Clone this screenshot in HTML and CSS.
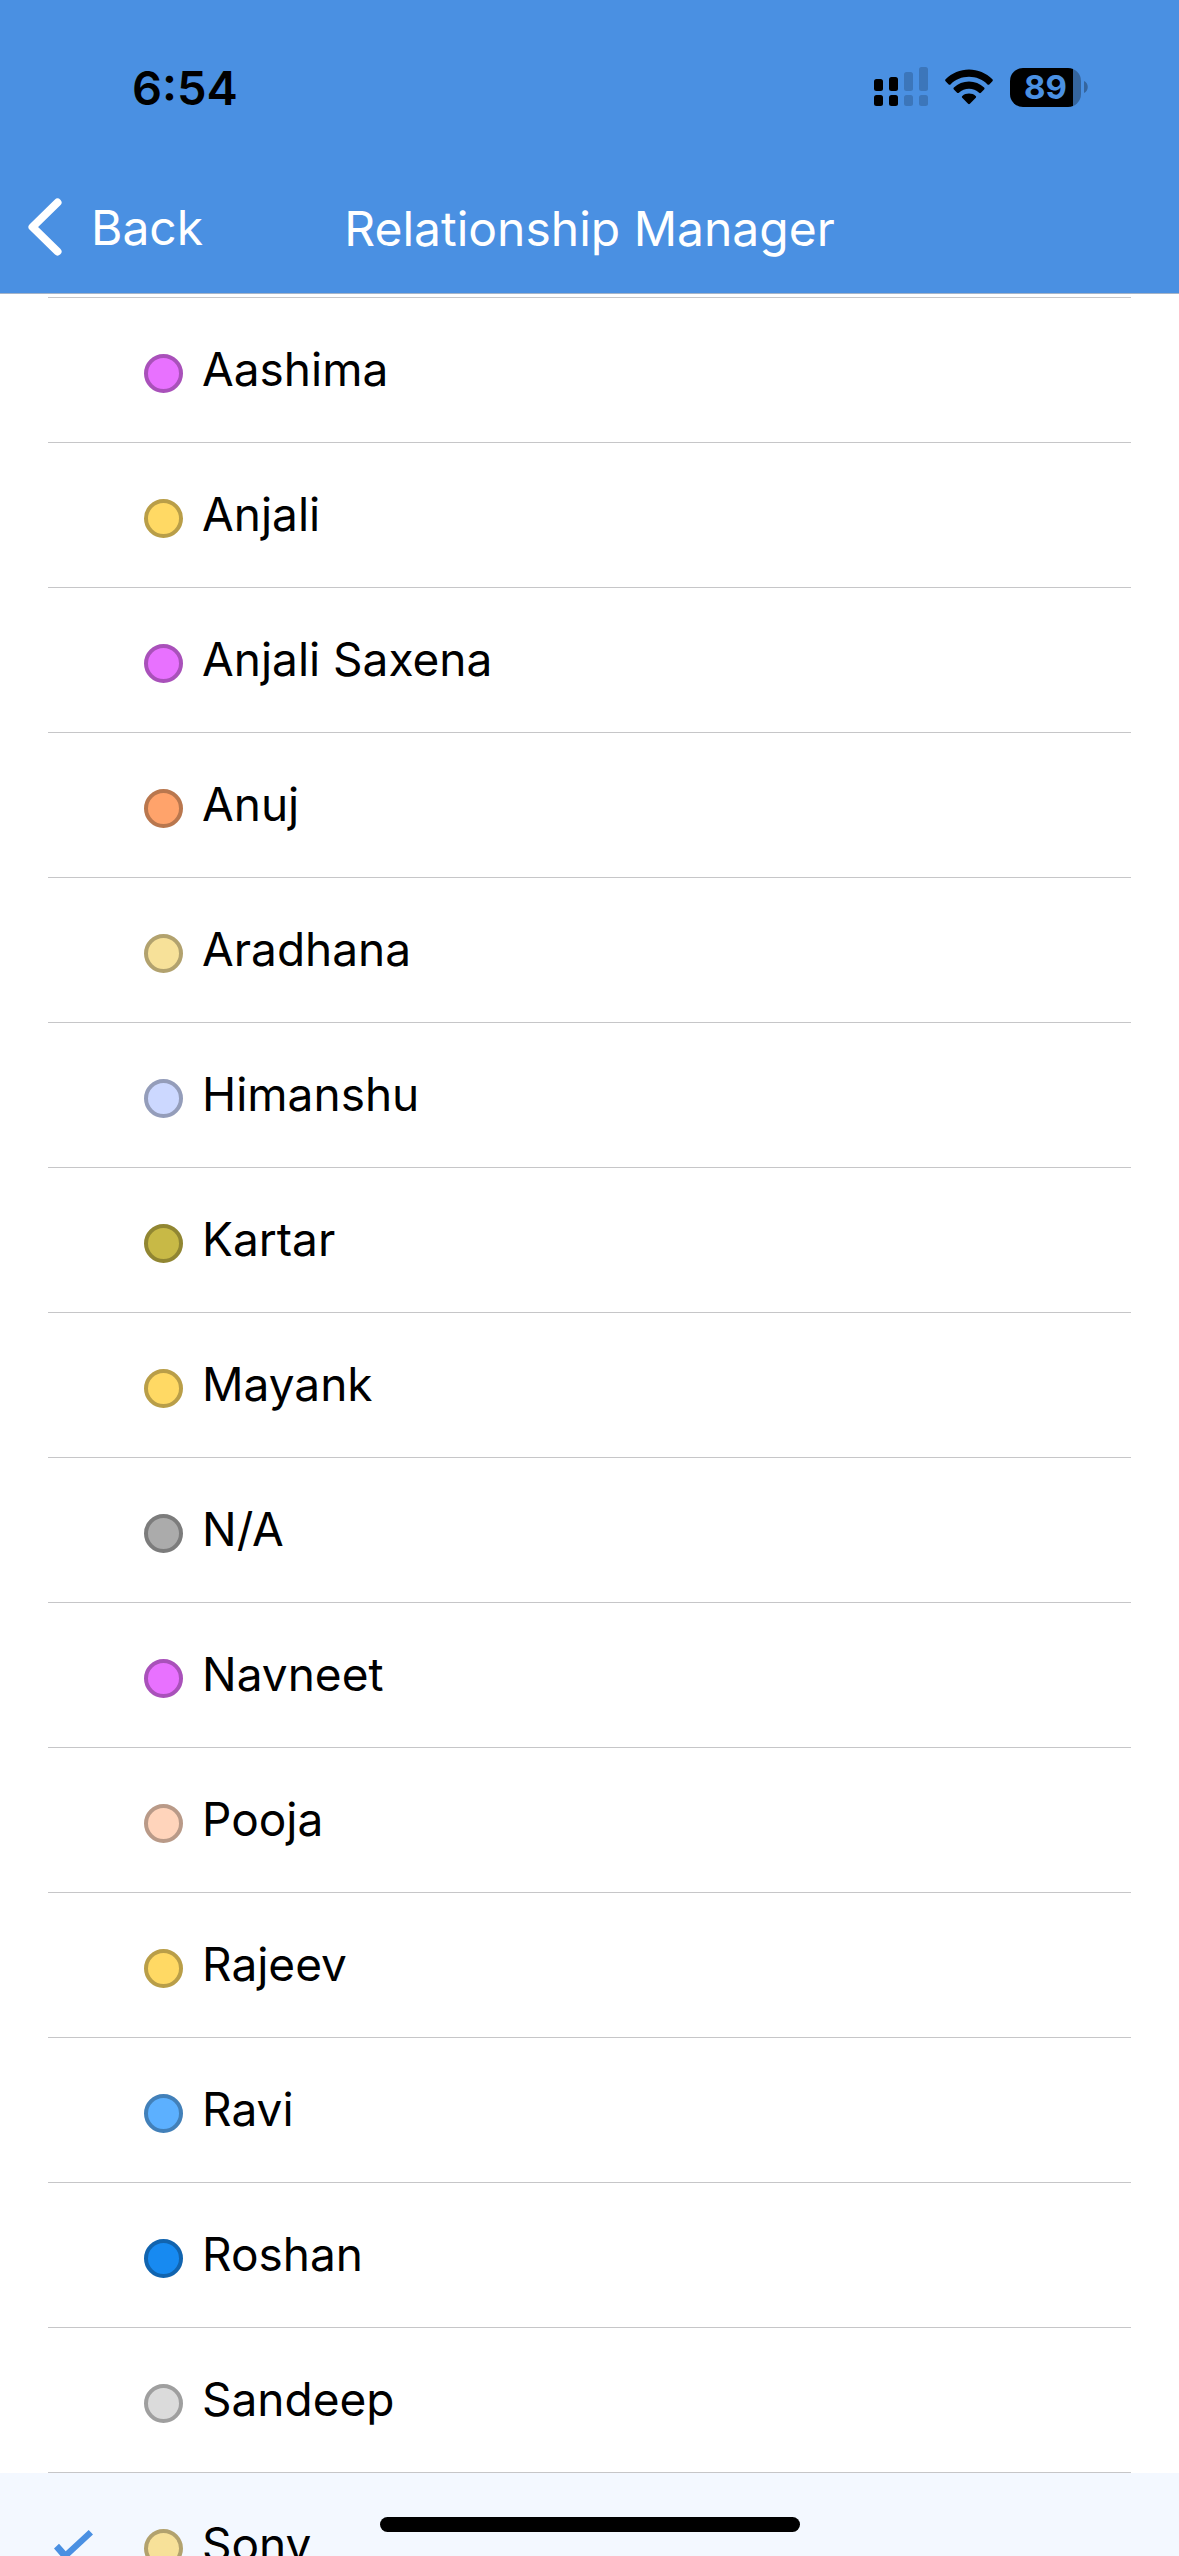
FILE: index.html
```html
<!DOCTYPE html>
<html lang="en">
<head>
    <meta charset="UTF-8">
    <meta name="viewport" content="width=device-width, initial-scale=1.0">
    <title>Relationship Manager</title>
    <link rel="stylesheet" href="styles.css">
</head>
<body>
    <header class="header">
        <div class="status-bar">
            <span class="time">6:54</span>
            <div class="status-icons">
                <svg class="signal" viewBox="0 0 54 40" aria-hidden="true">
                    <rect x="0" y="12" width="9" height="12" rx="2.5"/>
                    <rect x="15" y="10" width="9" height="14" rx="2.5"/>
                    <rect class="dim" x="30" y="5" width="9" height="19" rx="2.5"/>
                    <rect class="dim" x="45" y="0" width="9" height="24" rx="2.5"/>
                    <rect x="0" y="28" width="9" height="11" rx="2.5"/>
                    <rect x="15" y="28" width="9" height="11" rx="2.5"/>
                    <rect class="dim" x="30" y="28" width="9" height="11" rx="2.5"/>
                    <rect class="dim" x="45" y="28" width="9" height="11" rx="2.5"/>
                </svg>
                <svg class="wifi" viewBox="0 0 48 36" aria-hidden="true">
                    <path d="M.6 10.3C7 4 15.200 .5 24 .5s17 3.500 23.400 9.800c.6.600.6 1.300 0 1.900l-3.100 3.200c-.6.600-1.200.6-1.800 0C37.500 10.500 31 7.800 24 7.800S10.500 10.500 5.500 15.400c-.6.600-1.200.6-1.800 0L.6 12.200c-.6-.6-.6-1.300 0-1.900z"/>
                    <path d="M8.900 18.600C13 14.700 18.300 12.500 24 12.500s11 2.200 15.100 6.100c.6.600.6 1.300 0 1.900l-3.200 3.200c-.6.600-1.200.6-1.800 0C31.300 21.200 27.800 19.800 24 19.800s-7.300 1.400-10.100 3.900c-.6.500-1.200.5-1.800 0l-3.200-3.200c-.6-.6-.6-1.300 0-1.900z"/>
                    <path d="M17.300 26.900C19.200 25.300 21.500 24.500 24 24.500s4.800.8 6.700 2.400c.6.500.6 1.200.1 1.800l-5.900 6c-.6.600-1.200.6-1.800 0l-5.900-6c-.5-.6-.5-1.300.1-1.800z"/>
                </svg>
                <div class="battery">
                    <div class="battery-level">89</div>
                    <svg class="battery-cap" viewBox="0 0 4 12" aria-hidden="true"><path d="M0 0c5 2 5 10 0 12z"/></svg>
                </div>
            </div>
        </div>
        <nav class="nav-bar">
            <button class="back-btn" type="button">
                <svg viewBox="0 0 34 58" aria-hidden="true"><path d="M29.500 4.500L4.500 29l25 24.500"/></svg>
                Back
            </button>
            <h1 class="title">Relationship Manager</h1>
        </nav>
    </header>

    <ul class="list">
        <li><button class="row" type="button"><span class="row-content"><span class="check"></span><span class="dot violet"></span>Aashima</span></button></li>
        <li><button class="row" type="button"><span class="row-content"><span class="check"></span><span class="dot yellow"></span>Anjali</span></button></li>
        <li><button class="row" type="button"><span class="row-content"><span class="check"></span><span class="dot violet"></span>Anjali Saxena</span></button></li>
        <li><button class="row" type="button"><span class="row-content"><span class="check"></span><span class="dot orange"></span>Anuj</span></button></li>
        <li><button class="row" type="button"><span class="row-content"><span class="check"></span><span class="dot cream"></span>Aradhana</span></button></li>
        <li><button class="row" type="button"><span class="row-content"><span class="check"></span><span class="dot lavender"></span>Himanshu</span></button></li>
        <li><button class="row" type="button"><span class="row-content"><span class="check"></span><span class="dot olive"></span>Kartar</span></button></li>
        <li><button class="row" type="button"><span class="row-content"><span class="check"></span><span class="dot yellow"></span>Mayank</span></button></li>
        <li><button class="row" type="button"><span class="row-content"><span class="check"></span><span class="dot gray"></span>N/A</span></button></li>
        <li><button class="row" type="button"><span class="row-content"><span class="check"></span><span class="dot violet"></span>Navneet</span></button></li>
        <li><button class="row" type="button"><span class="row-content"><span class="check"></span><span class="dot peach"></span>Pooja</span></button></li>
        <li><button class="row" type="button"><span class="row-content"><span class="check"></span><span class="dot yellow"></span>Rajeev</span></button></li>
        <li><button class="row" type="button"><span class="row-content"><span class="check"></span><span class="dot sky"></span>Ravi</span></button></li>
        <li><button class="row" type="button"><span class="row-content"><span class="check"></span><span class="dot blue"></span>Roshan</span></button></li>
        <li><button class="row" type="button"><span class="row-content"><span class="check"></span><span class="dot silver"></span>Sandeep</span></button></li>
        <li>
            <button class="row selected" type="button" aria-pressed="true">
                <span class="row-content"><span class="check"><svg viewBox="0 0 39 31" aria-hidden="true"><path d="M0 18.500l5-4.800 6.700 7.600L34.700 0 39 4.500 10.700 30.700z"/></svg></span><span class="dot cream"></span>Sony</span>
            </button>
        </li>
    </ul>

    <div class="home-indicator"></div>
</body>
</html>
```
FILE: styles.css
```css
* {
    box-sizing: border-box;
}

body {
    font-family: Inter, 'Liberation Sans', sans-serif;
    margin: 0;
    height: 100vh;
    display: flex;
    flex-direction: column;
    overflow: hidden;
    background-color: #fff;
    color: #000;
}

button {
    border: none;
    background: none;
    margin: 0;
    padding: 0;
    font: inherit;
    color: inherit;
    text-align: left;
    cursor: pointer;
}

svg {
    display: block;
}

.header {
    flex: none;
    background-color: #4a90e2;
    border-bottom: 1px solid #a5b4c8;
}

.status-bar {
    display: flex;
    justify-content: space-between;
    align-items: center;
    height: 174px;
    padding: 0 91px 0 132px;
}

.time {
    font-size: 47px;
    font-weight: 600;
}

.status-icons {
    display: flex;
    align-items: center;
    gap: 17px;
}

.signal {
    width: 54px;
    height: 40px;
}

.dim {
    fill: #3c76ba;
}

.wifi {
    width: 48px;
    height: 36px;
}

.battery {
    display: flex;
    align-items: center;
    gap: 3px;
}

.battery-level {
    width: 71px;
    height: 39px;
    border-radius: 13px;
    background: linear-gradient(to right, #000 63px, #35659e 63px);
    color: #4a90e2;
    font-size: 33px;
    font-weight: 700;
    line-height: 39px;
    text-align: center;
}

.battery-cap {
    width: 4px;
    height: 12px;
    fill: #35659e;
}

.nav-bar {
    display: grid;
    grid-template-columns: 1fr auto 1fr;
    align-items: start;
    height: 119px;
    padding: 0 28px;
    color: #fff;
    font-size: 48px;
}

.back-btn {
    display: flex;
    align-items: center;
    gap: 29px;
    height: 106px;
}

.back-btn svg {
    width: 34px;
    height: 58px;
    fill: none;
    stroke: #fff;
    stroke-width: 8;
    stroke-linecap: round;
    stroke-linejoin: round;
}

.title {
    margin: 0;
    font-size: 48px;
    font-weight: 400;
    line-height: 110px;
}

.list {
    flex: 1;
    min-height: 0;
    overflow: hidden;
    margin: 0;
    padding: 0;
    list-style: none;
}

.list::before {
    content: '';
    display: block;
    height: 1px;
    margin: 3px 48px 0;
    background-color: #c6c6c8;
}

.row {
    display: block;
    width: 100%;
    padding: 0 48px;
    font-size: 46px;
}

.row-content {
    display: flex;
    align-items: center;
    height: 145px;
    padding-bottom: 2px;
    border-bottom: 1px solid #c6c6c8;
}

.row.selected {
    background-color: #f3f8ff;
}

.check {
    width: 96px;
    padding-top: 2px;
    padding-left: 6px;
}

.check svg {
    width: 39px;
    height: 31px;
    fill: #4a90e2;
}

.dot {
    width: 39px;
    height: 39px;
    margin-top: 8px;
    margin-right: 19px;
    border: 4px solid;
    border-radius: 50%;
}

.violet {
    background-color: #e871ff;
    border-color: #a951ba;
}

.yellow {
    background-color: #ffd964;
    border-color: #b99e48;
}

.orange {
    background-color: #ffa36b;
    border-color: #b9774e;
}

.cream {
    background-color: #f7e199;
    border-color: #b2a26e;
}

.lavender {
    background-color: #ccd8ff;
    border-color: #949dba;
}

.olive {
    background-color: #c8b946;
    border-color: #918632;
}

.gray {
    background-color: #ababab;
    border-color: #7c7c7c;
}

.peach {
    background-color: #ffd4bb;
    border-color: #b99a88;
}

.sky {
    background-color: #5cb0ff;
    border-color: #4280b9;
}

.blue {
    background-color: #178af1;
    border-color: #1164af;
}

.silver {
    background-color: #dbdbdb;
    border-color: #9f9f9f;
}

.home-indicator {
    position: fixed;
    bottom: 24px;
    left: 50%;
    width: 420px;
    height: 15px;
    margin-left: -210px;
    border-radius: 8px;
    background-color: #000;
}
```
